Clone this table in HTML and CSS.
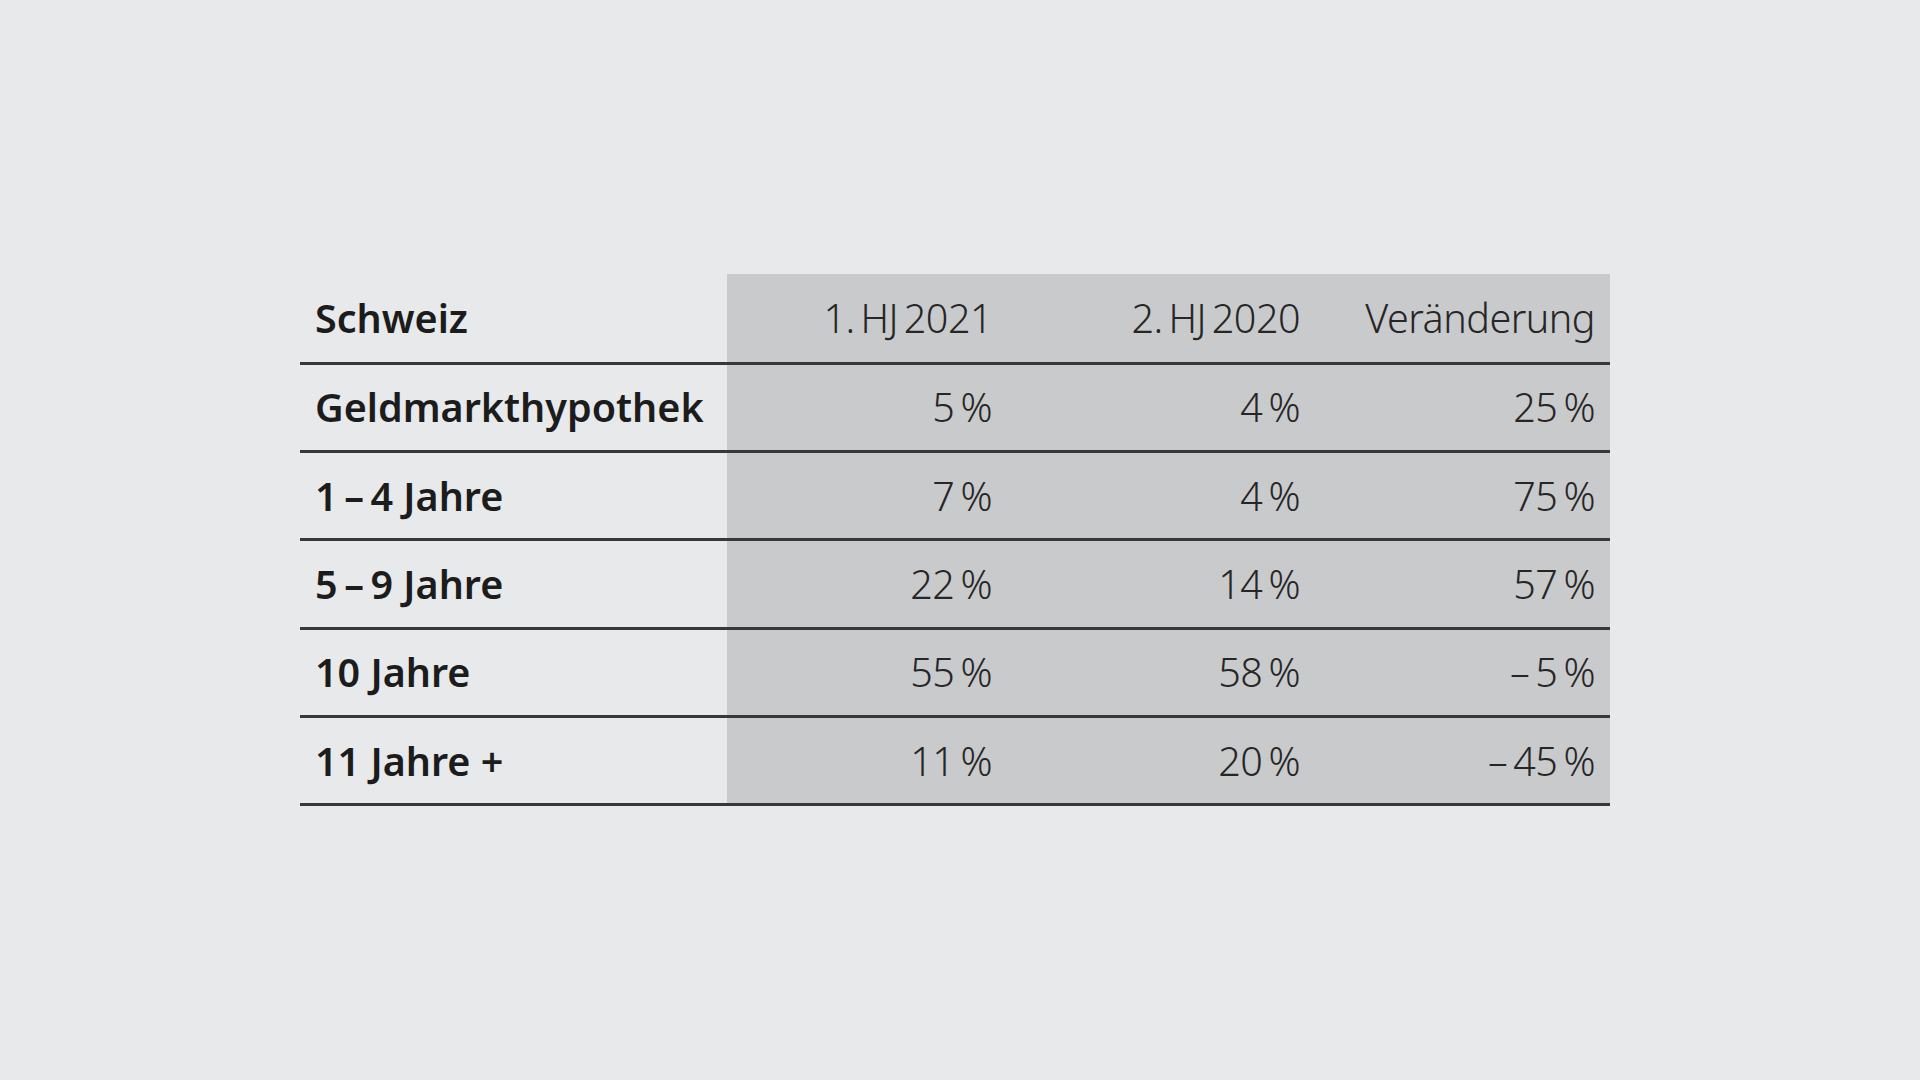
FILE: index.html
```html
<!DOCTYPE html>
<html lang="de">
<head>
<meta charset="utf-8">
<title>Schweiz Hypotheken</title>
<link rel="stylesheet" href="styles.css">
</head>
<body>
<main class="page">
  <table class="data">
    <colgroup>
      <col class="c-label">
      <col class="c-a">
      <col class="c-b">
      <col class="c-c">
    </colgroup>
    <thead>
      <tr>
        <th class="label">Schweiz</th>
        <th class="num">1. HJ 2021</th>
        <th class="num">2. HJ 2020</th>
        <th class="num">Veränderung</th>
      </tr>
    </thead>
    <tbody>
      <tr><td class="label">Geldmarkthypothek</td><td class="num">5&#8201;%</td><td class="num">4&#8201;%</td><td class="num">25&#8201;%</td></tr>
      <tr><td class="label">1&#8201;–&#8201;4 Jahre</td><td class="num">7&#8201;%</td><td class="num">4&#8201;%</td><td class="num">75&#8201;%</td></tr>
      <tr><td class="label">5&#8201;–&#8201;9 Jahre</td><td class="num">22&#8201;%</td><td class="num">14&#8201;%</td><td class="num">57&#8201;%</td></tr>
      <tr><td class="label">10 Jahre</td><td class="num">55&#8201;%</td><td class="num">58&#8201;%</td><td class="num">–&#8201;5&#8201;%</td></tr>
      <tr><td class="label">11 Jahre +</td><td class="num">11&#8201;%</td><td class="num">20&#8201;%</td><td class="num">–&#8201;45&#8201;%</td></tr>
    </tbody>
  </table>
</main>
</body>
</html>
```
FILE: styles.css
```css
html, body {
  margin: 0;
  padding: 0;
  background: #e8e9eb;
}
.page {
  width: 1920px;
  height: 1080px;
  box-sizing: border-box;
  padding: 274px 0 0 300px;
}
.data {
  border-collapse: collapse;
  width: 1310px;
  table-layout: fixed;
  font-family: "Noto Sans", "DejaVu Sans", sans-serif;
  color: #1c1c1c;
}
.c-label { width: 427px; }
.c-a { width: 280px; }
.c-b { width: 308px; }
.c-c { width: 295px; }
.data th, .data td {
  height: 85.4px;
  padding: 0 15px;
  border-bottom: 3px solid #383838;
  vertical-align: middle;
  white-space: nowrap;
}
.data thead th {
  height: 87.5px;
}
.data thead th.num {
  word-spacing: -4px;
}
.label {
  text-align: left;
  font-weight: 600;
  font-size: 39.5px;
  background: #e8e9eb;
}
.num {
  text-align: right;
  font-weight: 300;
  font-size: 39.5px;
  letter-spacing: -0.5px;
  background: #c9cacc;
  color: #262626;
}
```
